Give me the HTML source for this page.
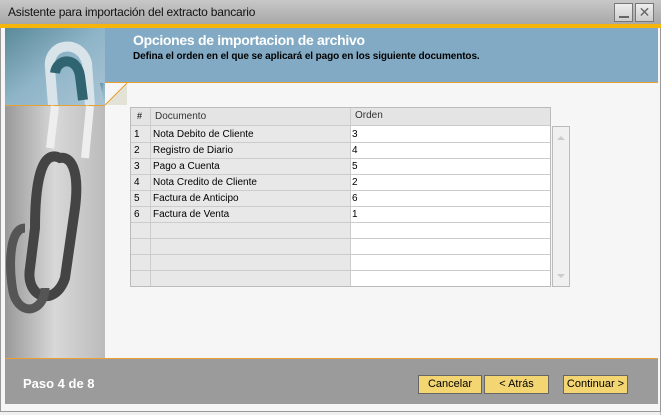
<!DOCTYPE html>
<html><head><style>
*{margin:0;padding:0;box-sizing:border-box}
body{width:668px;height:415px;background:#f0f0f0;font-family:"Liberation Sans",sans-serif;position:relative;overflow:hidden}
.abs{position:absolute}
.t{font-size:11px;color:#000;white-space:nowrap}
.r{position:absolute;left:131px;width:419px;height:1px;background:#ccc}
</style></head><body>
<div class="abs" style="left:660px;top:0;width:8px;height:415px;background:#fff;border-left:1px solid #bbb"></div>
<div class="abs" style="left:0;top:0;width:661px;height:412px;background:#f6f6f6;border:1px solid #999"></div>
<div class="abs" style="left:0;top:0;width:661px;height:24px;background:linear-gradient(#c8c8c8,#a8a8a8)"></div>
<div class="abs t" style="left:8px;top:5px;font-size:12px;color:#111;letter-spacing:-0.2px">Asistente para importación del extracto bancario</div>
<div class="abs" style="left:614px;top:3px;width:19px;height:19px;border:1px solid #777;background:linear-gradient(#eee,#ccc)"><div style="position:absolute;left:4px;top:12px;width:10px;height:2px;background:#666"></div></div>
<div class="abs" style="left:635px;top:3px;width:19px;height:19px;border:1px solid #777;background:linear-gradient(#eee,#ccc);font-size:14px;color:#666;text-align:center;line-height:17px">✕</div>
<div class="abs" style="left:0;top:24px;width:661px;height:4px;background:#f5b50a"></div>
<div class="abs" style="left:100px;top:28px;width:558px;height:55px;background:#82aac4;border-bottom:1px solid #e8a030"></div>
<div class="abs t" style="left:133px;top:32px;font-size:14px;font-weight:bold;color:#fff;letter-spacing:-0.3px">Opciones de importacion de archivo</div>
<div class="abs t" style="left:133px;top:51px;font-size:10px;font-weight:bold;letter-spacing:-0.1px">Defina el orden en el que se aplicará el pago en los siguiente documentos.</div>
<svg class="abs" style="left:5px;top:28px" width="123" height="331">
<defs><linearGradient id="g1" x1="0" y1="0" x2="1" y2="1"><stop offset="0" stop-color="#5a8a9a"/><stop offset=".5" stop-color="#8fb5c8"/><stop offset="1" stop-color="#a9c4d4"/></linearGradient>
<linearGradient id="g2" x1="0" y1="0" x2="1" y2="0"><stop offset="0" stop-color="#999"/><stop offset=".5" stop-color="#d8d8d8"/><stop offset="1" stop-color="#bbb"/></linearGradient></defs>
<polygon points="100,77 122,55 122,77" fill="#e2e2d6"/>
<rect x="0" y="0" width="100" height="77" fill="url(#g1)"/>
<polygon points="95,55 100,55 100,77" fill="url(#g1)"/>
<path d="M48,78 L45,40 C42,15 75,10 82,35 L85,78" stroke="#d8e4ea" stroke-width="10" fill="none"/>
<path d="M50,45 C52,30 72,28 75,48 L78,72" stroke="#2f6470" stroke-width="10" fill="none"/>
<path d="M100,77 L122,55" stroke="#e8a030" stroke-width="1" fill="none"/>
<rect x="0" y="77" width="100" height="1" fill="#e8a030"/>
<rect x="0" y="78" width="100" height="253" fill="url(#g2)"/>
<path d="M50,78 L45,120 M85,78 L80,130" stroke="#eee" stroke-width="8" fill="none"/>
<path d="M55,130 C35,120 30,160 30,200 L25,240 C20,270 50,280 60,250 L70,180 C75,140 65,128 55,130Z" fill="none" stroke="#444" stroke-width="10"/>
<path d="M20,200 C0,200 5,260 10,270 C20,290 40,280 40,260" fill="none" stroke="#555" stroke-width="9"/>
</svg>
<div class="abs" style="left:5px;top:358px;width:653px;height:1px;background:#e8a030"></div>
<div class="abs" style="left:5px;top:359px;width:653px;height:45px;background:#9b9b9b"></div>
<div class="abs t" style="left:23px;top:376px;font-size:13px;font-weight:bold;color:#fff">Paso 4 de 8</div>
<div class="abs t" style="left:418px;top:375px;width:64px;height:19px;background:#f3d572;border:1px solid #666;text-align:center;line-height:17px">Cancelar</div>
<div class="abs t" style="left:484px;top:375px;width:65px;height:19px;background:#f3d572;border:1px solid #666;text-align:center;line-height:17px">&lt; Atrás</div>
<div class="abs t" style="left:563px;top:375px;width:65px;height:19px;background:#f3d572;border:1px solid #666;text-align:center;line-height:17px">Continuar &gt;</div>
<div class="abs" style="left:130px;top:107px;width:421px;height:180px;border:1px solid #bbb;background:#fff"></div>
<div class="abs" style="left:131px;top:108px;width:419px;height:18px;background:#e4e4e4;border-bottom:1px solid #ccc"></div>
<div class="abs" style="left:131px;top:126px;width:219px;height:160px;background:#e8e8e8"></div>
<div class="abs" style="left:150px;top:108px;width:1px;height:178px;background:#ccc"></div>
<div class="abs" style="left:350px;top:108px;width:1px;height:178px;background:#ccc"></div>
<div class="abs t" style="left:137px;top:111px;font-size:9px">#</div>
<div class="abs t" style="left:155px;top:111px;font-size:10px;color:#333">Documento</div>
<div class="abs t" style="left:355px;top:110px;font-size:10px;color:#333">Orden</div>
<div class="abs" style="left:552px;top:126px;width:18px;height:161px;border:1px solid #bbb;background:#f0f0f0"><div style="position:absolute;left:4px;top:5px;border:4px solid transparent;border-bottom:4px solid #ccc"></div><div style="position:absolute;left:4px;top:147px;border:4px solid transparent;border-top:4px solid #ccc"></div></div>
<div class="r" style="top:142px"></div><div class="r" style="top:158px"></div><div class="r" style="top:174px"></div>
<div class="r" style="top:190px"></div><div class="r" style="top:206px"></div><div class="r" style="top:222px"></div>
<div class="r" style="top:238px"></div><div class="r" style="top:254px"></div><div class="r" style="top:270px"></div>
<div class="abs t" style="left:134px;top:129px;font-size:10px">1</div><div class="abs t" style="left:153px;top:129px;font-size:10px">Nota Debito de Cliente</div><div class="abs t" style="left:352px;top:129px;font-size:10px">3</div>
<div class="abs t" style="left:134px;top:145px;font-size:10px">2</div><div class="abs t" style="left:153px;top:145px;font-size:10px">Registro de Diario</div><div class="abs t" style="left:352px;top:145px;font-size:10px">4</div>
<div class="abs t" style="left:134px;top:161px;font-size:10px">3</div><div class="abs t" style="left:153px;top:161px;font-size:10px">Pago a Cuenta</div><div class="abs t" style="left:352px;top:161px;font-size:10px">5</div>
<div class="abs t" style="left:134px;top:177px;font-size:10px">4</div><div class="abs t" style="left:153px;top:177px;font-size:10px">Nota Credito de Cliente</div><div class="abs t" style="left:352px;top:177px;font-size:10px">2</div>
<div class="abs t" style="left:134px;top:193px;font-size:10px">5</div><div class="abs t" style="left:153px;top:193px;font-size:10px">Factura de Anticipo</div><div class="abs t" style="left:352px;top:193px;font-size:10px">6</div>
<div class="abs t" style="left:134px;top:209px;font-size:10px">6</div><div class="abs t" style="left:153px;top:209px;font-size:10px">Factura de Venta</div><div class="abs t" style="left:352px;top:209px;font-size:10px">1</div>
</body></html>
